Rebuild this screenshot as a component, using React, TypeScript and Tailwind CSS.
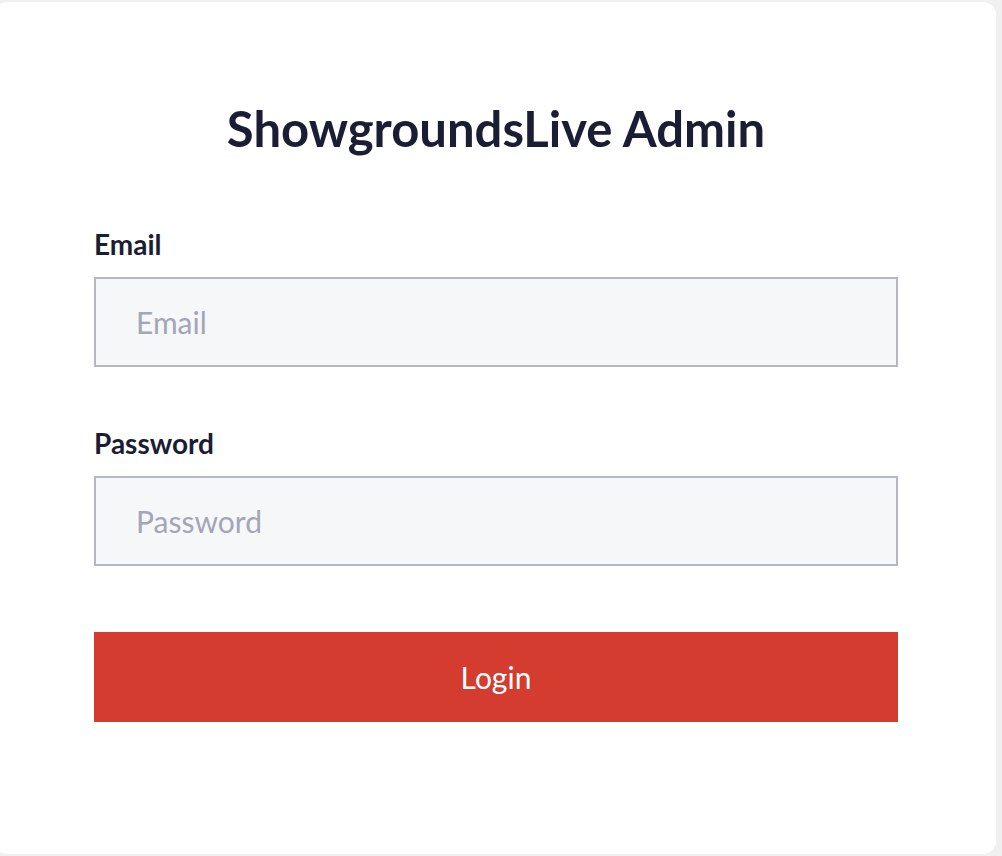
import React from "react";

export default function App() {
  return (
    <div className="h-[856px] w-[1002px] overflow-hidden bg-[#f0f0f1] pt-[2px] font-['Lato',sans-serif]">
      <div className="ml-[-6px] h-[852px] w-[1002px] rounded-[13px] bg-white pl-[100px] pr-[98px] pt-[97px]">
        <h1 className="text-center text-[49px] font-bold leading-[58px] text-[#1b1d35]">
          ShowgroundsLive Admin
        </h1>
        <div className="mt-[70px] flex flex-col">
          <label className="text-[28px] font-bold leading-[34px] text-[#1b1d35]">Email</label>
          <input
            placeholder="Email"
            className="mt-[16px] h-[90px] w-full border-2 border-[#b6b6c5] bg-[#f6f7f9] px-[40px] text-[30px] text-[#1b1d35] outline-none placeholder:text-[#a3a5b8]"
          />
          <label className="mt-[59px] text-[28px] font-bold leading-[34px] text-[#1b1d35]">Password</label>
          <input
            type="password"
            placeholder="Password"
            className="mt-[16px] h-[90px] w-full border-2 border-[#b6b6c5] bg-[#f6f7f9] px-[40px] text-[30px] text-[#1b1d35] outline-none placeholder:text-[#a3a5b8]"
          />
          <button className="mt-[66px] h-[90px] w-full bg-[#d43c2f] text-[30px] text-white">
            Login
          </button>
        </div>
      </div>
    </div>
  );
}
